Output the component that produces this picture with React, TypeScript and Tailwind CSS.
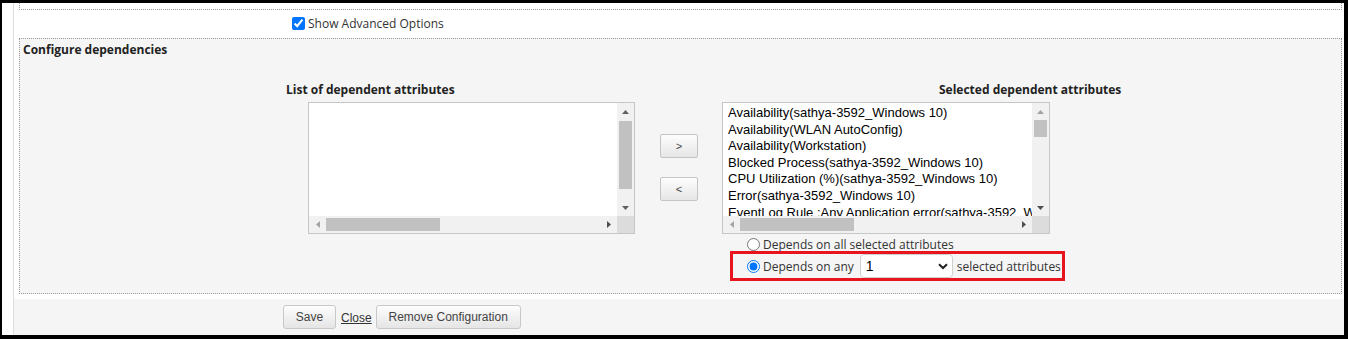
import React from "react";

type Dir = "up" | "down" | "left" | "right";

function Arrow({ dir, color }: { dir: Dir; color: string }) {
  const vert = dir === "up" || dir === "down";
  const w = vert ? 7 : 4;
  const h = vert ? 4 : 7;
  const pts = {
    up: "0,4 3.5,0 7,4",
    down: "0,0 7,0 3.5,4",
    left: "4,0 4,7 0,3.5",
    right: "0,0 0,7 4,3.5",
  }[dir];
  return (
    <svg width={w} height={h} viewBox={`0 0 ${w} ${h}`}>
      <polygon points={pts} fill={color} />
    </svg>
  );
}

function ListBox({
  items,
  widthCls,
  vThumbCls,
  upC,
  downC,
  leftC,
  rightC,
}: {
  items: string[];
  widthCls: string;
  vThumbCls: string;
  upC: string;
  downC: string;
  leftC: string;
  rightC: string;
}) {
  return (
    <div
      className={`grid h-[132px] ${widthCls} grid-cols-[1fr_17px] grid-rows-[1fr_17px] border border-[#c6c6c6] bg-white`}
    >
      <div className="overflow-hidden whitespace-nowrap pl-[5px] pt-[2px] font-['Liberation_Sans',Arial,sans-serif] text-[13px] leading-[16.6px] text-black">
        {items.map((i) => (
          <div key={i}>{i}</div>
        ))}
      </div>
      <div className="flex flex-col bg-[#f1f1f1]">
        <div className="flex h-[17px] items-center justify-center">
          <Arrow dir="up" color={upC} />
        </div>
        <div className="flex-1">
          <div className={`mx-[2px] w-[13px] bg-[#c1c1c1] ${vThumbCls}`} />
        </div>
        <div className="flex h-[17px] items-center justify-center">
          <Arrow dir="down" color={downC} />
        </div>
      </div>
      <div className="flex bg-[#f1f1f1]">
        <div className="flex w-[17px] items-center justify-center">
          <Arrow dir="left" color={leftC} />
        </div>
        <div className="flex-1">
          <div className="my-[2px] h-[13px] w-[114px] bg-[#c1c1c1]" />
        </div>
        <div className="flex w-[17px] items-center justify-center">
          <Arrow dir="right" color={rightC} />
        </div>
      </div>
      <div className="bg-[#dcdcdc]" />
    </div>
  );
}

const selected = [
  "Availability(sathya-3592_Windows 10)",
  "Availability(WLAN AutoConfig)",
  "Availability(Workstation)",
  "Blocked Process(sathya-3592_Windows 10)",
  "CPU Utilization (%)(sathya-3592_Windows 10)",
  "Error(sathya-3592_Windows 10)",
  "EventLog Rule :Any Application error(sathya-3592_Windows 10)",
];

export default function App() {
  return (
    <div className="h-[339px] w-[1348px] bg-black pb-[4px] pl-[2px] pr-[4px] pt-[3px] font-['Open_Sans',sans-serif] text-[12px] text-[#333]">
      <div className="flex h-[332px] bg-white">
        <div className="w-[11px]" />
        <div className="w-px bg-[#dddddd]" />
        <div className="flex flex-1 flex-col">
          {/* previous fieldset bottom */}
          <div className="ml-[5px] h-[7px] w-[1323px] border-x border-b border-dotted border-[#9a9a9a]" />

          {/* show advanced options */}
          <div className="flex h-[28px] items-center pb-[1px] pl-[278px]">
            <input type="checkbox" defaultChecked className="m-0 h-[13px] w-[13px]" />
            <span className="ml-[3px] leading-[16px]">Show Advanced Options</span>
          </div>

          {/* configure dependencies fieldset */}
          <div className="ml-[5px] flex h-[256px] w-[1323px] flex-col border border-dotted border-[#9a9a9a] bg-[#f5f5f5] pt-[2px]">
            <div className="h-[17px] pl-[3px] font-bold leading-[17px] text-[#222]">
              Configure dependencies
            </div>

            <div className="mt-[23px] flex h-[17px] font-bold leading-[17px] text-[#222]">
              <div className="ml-[266px] w-[653px]">List of dependent attributes</div>
              <div>Selected dependent attributes</div>
            </div>

            <div className="ml-[288px] mt-[4px] flex">
              <ListBox
                items={[]}
                widthCls="w-[327px]"
                vThumbCls="mt-[1px] h-[68px]"
                upC="#606060"
                downC="#606060"
                leftC="#a3a3a3"
                rightC="#505050"
              />
              <div className="ml-[25px] flex flex-col pt-[32px]">
                <button className="h-[24px] w-[38px] rounded-[2px] border border-[#c4c4c4] bg-linear-to-b from-[#fdfdfd] to-[#e6e6e6] font-['Liberation_Sans',Arial,sans-serif] text-[11px] text-[#444]">
                  &gt;
                </button>
                <button className="mt-[19px] h-[24px] w-[38px] rounded-[2px] border border-[#c4c4c4] bg-linear-to-b from-[#fdfdfd] to-[#e6e6e6] font-['Liberation_Sans',Arial,sans-serif] text-[11px] text-[#444]">
                  &lt;
                </button>
              </div>
              <div className="ml-[24px]">
                <ListBox
                  items={selected}
                  widthCls="w-[328px]"
                  vThumbCls="mt-0 h-[17px]"
                  upC="#a3a3a3"
                  downC="#505050"
                  leftC="#a3a3a3"
                  rightC="#505050"
                />
              </div>
            </div>

            <div className="ml-[713px] mt-[2px] flex h-[17px] items-center pl-[14px]">
              <input type="radio" name="dep" className="m-0 h-[13px] w-[13px]" />
              <span className="ml-[3px] leading-[17px]">Depends on all selected attributes</span>
            </div>

            <div className="ml-[713px] mt-[1px] flex h-[24px] w-[329px] items-center pl-[14px] outline-[3px] outline-[#e8141e] outline-solid">
              <input type="radio" name="dep" defaultChecked className="m-0 h-[13px] w-[13px]" />
              <span className="ml-[3px] leading-[17px]">Depends on any</span>
              <div className="ml-[6px] flex h-[24px] w-[93px] items-center justify-between rounded-[4px] border border-[#cfcfcf] bg-white pl-[5px] pr-[4px] font-['Liberation_Sans',Arial,sans-serif] text-[14px] text-black">
                <span>1</span>
                <svg width="10" height="7" viewBox="0 0 10 7">
                  <polyline points="1,1.2 5,5 9,1.2" fill="none" stroke="#222" strokeWidth="2" />
                </svg>
              </div>
              <span className="ml-[4px] leading-[17px]">selected attributes</span>
            </div>
          </div>

          <div className="h-[5px]" />

          {/* button row */}
          <div className="flex h-[36px] items-start bg-[#f5f5f5] pl-[269px] pt-[6px] font-['Liberation_Sans',Arial,sans-serif] text-[12px]">
            <button className="h-[24px] w-[53px] rounded-[3px] border border-[#c8c8c8] bg-linear-to-b from-[#fdfdfd] to-[#e5e5e5] text-[#444]">
              Save
            </button>
            <a className="ml-[5px] mt-[4px] text-[#333] underline">Close</a>
            <button className="ml-[4px] h-[24px] w-[145px] rounded-[3px] border border-[#c8c8c8] bg-linear-to-b from-[#fdfdfd] to-[#e5e5e5] text-[#444]">
              Remove Configuration
            </button>
          </div>
        </div>
      </div>
    </div>
  );
}
